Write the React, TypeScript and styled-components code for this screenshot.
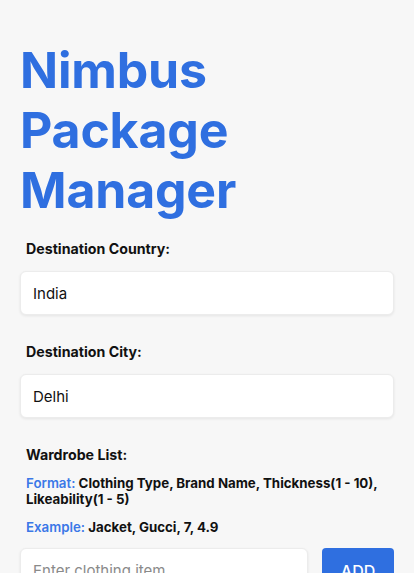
import React from "react";
import styled, { createGlobalStyle } from "styled-components";

const Global = createGlobalStyle`
  html, body { margin: 0; padding: 0; background: #f7f7f7; }
  body { font-family: Inter, "Noto Sans", sans-serif; color: #111; }
  * { box-sizing: border-box; }
`;

const Page = styled.main`
  padding: 40px 20px 20px 20px;
  display: flex;
  flex-direction: column;
`;

const Title = styled.h1`
  margin: 0 0 20px 0;
  font-size: 50px;
  line-height: 60px;
  font-weight: 700;
  color: #2f6fe0;
  letter-spacing: -0.2px;
`;

const Field = styled.section`
  display: flex;
  flex-direction: column;
  margin-bottom: 28px;
`;

const Label = styled.label<{ $gap?: number }>`
  padding-left: 6px;
  font-size: 14.2px;
  line-height: 17px;
  font-weight: 700;
  color: #111;
  margin-bottom: ${(p) => (p.$gap ?? 14)}px;
`;

const TextBox = styled.input`
  height: 44px;
  width: 100%;
  border: 1px solid #ececec;
  border-radius: 6px;
  background: #fff;
  box-shadow: 0 1px 3px rgba(0, 0, 0, 0.08);
  padding: 0 12px;
  font-family: Inter, "Noto Sans", sans-serif;
  font-size: 15px;
  color: #111;
  outline: none;
  &::placeholder { color: #8a8a8a; }
`;

const Hint = styled.p`
  margin: 0 0 12px 0;
  padding-left: 6px;
  font-size: 13.3px;
  line-height: 16px;
  font-weight: 700;
  color: #111;
`;

const Key = styled.span`
  color: #3b78e7;
  font-weight: 600;
`;

const AddRow = styled.div`
  display: flex;
  gap: 14px;
  margin-top: 1px;
`;

const AddButton = styled.button`
  flex: 0 0 72px;
  height: 46px;
  border: none;
  border-radius: 4px;
  background: #2f6fe0;
  color: #fff;
  font-family: Inter, "Noto Sans", sans-serif;
  font-size: 16px;
  font-weight: 500;
  cursor: pointer;
`;

const HintBlock = styled.div`
  display: flex;
  flex-direction: column;
`;

export default function App() {
  return (
    <>
      <Global />
      <Page>
        <Title>
          Nimbus
          <br />
          Package
          <br />
          Manager
        </Title>
        <Field>
          <Label>Destination Country:</Label>
          <TextBox defaultValue="India" />
        </Field>
        <Field>
          <Label>Destination City:</Label>
          <TextBox defaultValue="Delhi" />
        </Field>
        <Field>
          <Label $gap={12}>Wardrobe List:</Label>
          <HintBlock>
            <Hint>
              <Key>Format:</Key> Clothing Type, Brand Name, Thickness(1 - 10),
              Likeability(1 - 5)
            </Hint>
            <Hint>
              <Key>Example:</Key> Jacket, Gucci, 7, 4.9
            </Hint>
          </HintBlock>
          <AddRow>
            <TextBox placeholder="Enter clothing item" />
            <AddButton>ADD</AddButton>
          </AddRow>
        </Field>
      </Page>
    </>
  );
}
